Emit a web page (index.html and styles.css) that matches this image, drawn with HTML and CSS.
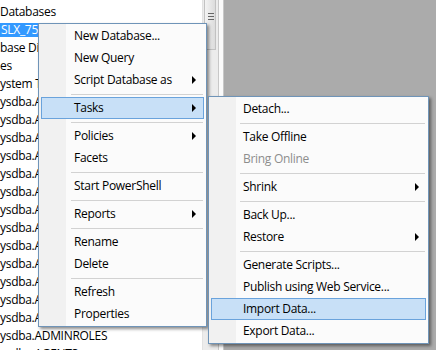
FILE: index.html
```html
<!DOCTYPE html>
<html>
<head>
<meta charset="utf-8">
<link rel="stylesheet" href="styles.css">
</head>
<body>
  <div class="screen">
    <div class="tree">
      <div class="node">Databases</div>
      <div class="node"><span class="selected">SLX_754</span></div>
      <div class="node">base Diagrams</div>
      <div class="node">es</div>
      <div class="node">ystem Tables</div>
      <div class="node">ysdba.ACCOUNT</div>
      <div class="node">ysdba.ACCOUNTCONFIG</div>
      <div class="node">ysdba.ACTIVITY</div>
      <div class="node">ysdba.ADDRESS</div>
      <div class="node">ysdba.ADHOCGROUP</div>
      <div class="node">ysdba.ADMIN</div>
      <div class="node">ysdba.ADMINACCESS</div>
      <div class="node">ysdba.ADMINAUDIT</div>
      <div class="node">ysdba.ADMINCONFIG</div>
      <div class="node">ysdba.ADMINDATA</div>
      <div class="node">ysdba.ADMINGROUP</div>
      <div class="node">ysdba.ADMINLOG</div>
      <div class="node">ysdba.ADMINPLUGIN</div>
      <div class="node">ysdba.ADMINROLES</div>
      <div class="node">ysdba.AGENTS</div>
    </div>
    <div class="vscroll">
      <div class="thumb"><span class="grip"></span></div>
    </div>
    <div class="splitter"></div>
    <div class="pane"></div>

    <ul class="menu main-menu">
      <li class="item">New Database...</li>
      <li class="item">New Query</li>
      <li class="item arrow">Script Database as</li>
      <li class="sep"></li>
      <li class="item arrow active">Tasks</li>
      <li class="sep"></li>
      <li class="item arrow">Policies</li>
      <li class="item">Facets</li>
      <li class="sep"></li>
      <li class="item">Start PowerShell</li>
      <li class="sep"></li>
      <li class="item arrow">Reports</li>
      <li class="sep"></li>
      <li class="item">Rename</li>
      <li class="item">Delete</li>
      <li class="sep"></li>
      <li class="item">Refresh</li>
      <li class="item">Properties</li>
    </ul>

    <ul class="menu sub-menu">
      <li class="item">Detach...</li>
      <li class="sep"></li>
      <li class="item">Take Offline</li>
      <li class="item disabled">Bring Online</li>
      <li class="sep"></li>
      <li class="item arrow">Shrink</li>
      <li class="sep"></li>
      <li class="item">Back Up...</li>
      <li class="item arrow">Restore</li>
      <li class="sep"></li>
      <li class="item">Generate Scripts...</li>
      <li class="item">Publish using Web Service...</li>
      <li class="item active">Import Data...</li>
      <li class="item">Export Data...</li>
    </ul>
  </div>
</body>
</html>
```

FILE: styles.css
```css
body{
  margin: 0;
  font-family: "Open Sans", "Noto Sans", sans-serif;
  font-size: 12px;
  letter-spacing: -0.3px;
  color: #000;
}

.screen{
  position: relative;
  width: 436px;
  height: 350px;
  overflow: hidden;
  display: flex;
  background-color: #fff;
}

/* object explorer tree */
.tree{
  width: 202px;
  padding-top: 3px;
  overflow: hidden;
  white-space: nowrap;
}

.node{
  height: 18px;
  line-height: 18px;
}

.selected{
  display: inline-block;
  line-height: 14px;
  padding: 0 4px 0 1px;
  background-color: #3399ff;
  color: #fff;
}

.vscroll{
  width: 15px;
  border-left: 1px solid #e2e2e2;
  background-color: #ececec;
}

.thumb{
  width: 12px;
  height: 50px;
  margin-left: 1px;
  border: 1px solid #c2c2c2;
  border-top: none;
  box-sizing: border-box;
  background: linear-gradient(to right, #f3f3f3, #dcdcdc);
  position: relative;
}

.grip{
  position: absolute;
  left: 3px;
  top: 13px;
  width: 6px;
  height: 5px;
  border-top: 1px solid #666;
  border-bottom: 1px solid #666;
  background: linear-gradient(#666, #666) 0 2px / 6px 1px no-repeat;
}

.splitter{
  width: 4px;
  border-left: 1px solid #c8c8c8;
  border-right: 1px solid #c8c8c8;
  background-color: #fbfbfb;
}

.pane{
  flex: 1;
  background-color: #ababab;
}

/* context menus */
.menu{
  position: absolute;
  margin: 0;
  padding: 1px 2px;
  list-style: none;
  box-sizing: border-box;
  border: 1px solid #6f94b8;
  background: linear-gradient(to right, #f1f1f1 0, #f1f1f1 27px, #fbfbfb 27px);
  box-shadow: 2px 2px 3px rgba(0, 0, 0, 0.45);
}

.main-menu{
  left: 38px;
  top: 23px;
  width: 169px;
}

.sub-menu{
  left: 208px;
  top: 96px;
  width: 221px;
}

.item{
  position: relative;
  height: 22px;
  line-height: 20px;
  box-sizing: border-box;
  padding-left: 32px;
  border: 1px solid transparent;
  white-space: nowrap;
}

.sub-menu .item{
  padding-left: 31px;
}

.item.active{
  background-color: #c8e0f7;
  border-color: #6aa3dc;
}

.item.disabled{
  color: #8d8d8d;
}

.arrow::after{
  content: "";
  position: absolute;
  right: 7px;
  top: 6px;
  border-left: 4px solid #000;
  border-top: 4px solid transparent;
  border-bottom: 4px solid transparent;
}

.sub-menu .arrow::after{
  right: 6px;
}

.sep{
  height: 1px;
  margin: 3px 1px 2px 30px;
  background-color: #d2d2d2;
}

.sub-menu .sep{
  margin-left: 29px;
}
```
